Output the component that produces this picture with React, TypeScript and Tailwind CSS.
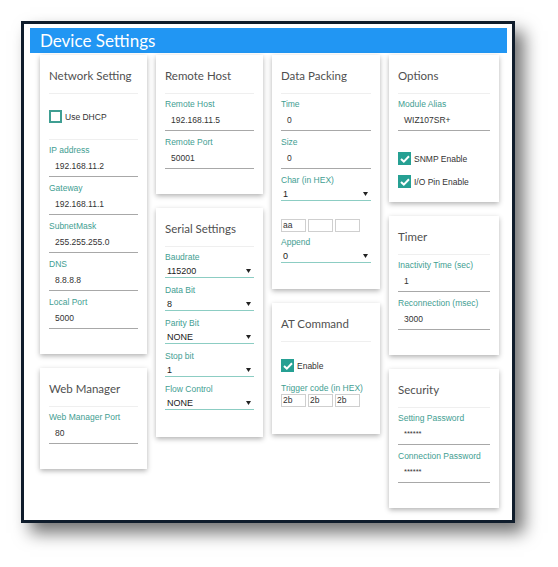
import React from 'react';

const TEAL = 'text-[#3f9e92]';

const Card: React.FC<{ title: string; pb?: string; children: React.ReactNode }> = ({ title, pb = 'pb-[25px]', children }) => (
  <div className={`bg-white shadow-[0_2px_5px_rgba(0,0,0,0.3)] px-[9px] ${pb}`}>
    <div className="pt-[13px] pb-[9px] border-b border-[#efefef] text-[11.5px] leading-[16px] text-[#505050] font-['Lato',sans-serif]">
      {title}
    </div>
    {children}
  </div>
);

const Label: React.FC<{ children: React.ReactNode }> = ({ children }) => (
  <div className={`h-[10px] leading-[10px] text-[8.5px] ${TEAL} whitespace-nowrap`}>{children}</div>
);

const TextField: React.FC<{ label: string; value: string; small?: boolean }> = ({ label, value, small }) => (
  <div>
    <Label>{label}</Label>
    <div className={`pt-[5px] pb-[4px] pl-[6px] leading-[12px] border-b border-[#a8a8a8] text-[#333] ${small ? 'text-[7.5px]' : 'text-[8.5px]'}`}>
      {value}
    </div>
  </div>
);

const SelectField: React.FC<{ label: string; value: string }> = ({ label, value }) => (
  <div>
    <Label>{label}</Label>
    <div className="pt-[4px] pb-[1px] pl-[2px] pr-[3px] leading-[10px] border-b border-[#8ccdc3] text-[9px] text-[#222] flex items-center justify-between">
      <span>{value}</span>
      <svg width="5" height="4" viewBox="0 0 5 4">
        <path d="M0 0 L5 0 L2.5 4 Z" fill="#222" />
      </svg>
    </div>
  </div>
);

const Check: React.FC<{ label: string; checked?: boolean }> = ({ label, checked }) => (
  <div className="flex items-center gap-[3px] h-[13px]">
    {checked ? (
      <div className="w-[13px] h-[13px] bg-[#26a093] flex items-center justify-center">
        <svg width="10" height="8" viewBox="0 0 10 8">
          <path d="M1 4 L3.8 6.6 L9 1.2" fill="none" stroke="#fff" strokeWidth="2" />
        </svg>
      </div>
    ) : (
      <div className="w-[13px] h-[13px] border-2 border-[#3f9e92]" />
    )}
    <span className="text-[8.5px] leading-[10px] text-[#333]">{label}</span>
  </div>
);

const HexBoxes: React.FC<{ values: string[] }> = ({ values }) => (
  <div className="flex gap-[2px]">
    {values.map((v, i) => (
      <div key={i} className="w-[25px] h-[13px] border border-[#cfcfcf] pl-[1px] text-[8.5px] leading-[11px] text-[#333]">
        {v}
      </div>
    ))}
  </div>
);

const App: React.FC = () => {
  return (
    <div className="w-[558px] h-[567px] bg-white pl-[21px] pt-[21px] font-['Liberation_Sans',Arial,sans-serif]">
      <div className="w-[494px] h-[502px] border-[3px] border-[#0f1c2b] bg-white shadow-[9px_10px_16px_rgba(0,0,0,0.55)] pt-[4px] pl-[6px]">
        <div className="w-[477px] h-[25px] bg-[#2196f3] text-white text-[17px] leading-[26px] pl-[10px] font-['Lato',sans-serif]">
          Device Settings
        </div>
        <div className="flex gap-[9px] pl-[10px] pt-[2px]">
          {/* column 1 */}
          <div className="w-[107px] flex flex-col gap-[14px]">
            <Card title="Network Setting">
              <div className="pt-[16px] pb-[16px] border-b border-[#efefef]">
                <Check label="Use DHCP" />
              </div>
              <div className="flex flex-col gap-[6px] mt-[5px]">
                <TextField label="IP address" value="192.168.11.2" />
                <TextField label="Gateway" value="192.168.11.1" />
                <TextField label="SubnetMask" value="255.255.255.0" />
                <TextField label="DNS" value="8.8.8.8" />
                <TextField label="Local Port" value="5000" />
              </div>
            </Card>
            <Card title="Web Manager">
              <div className="mt-[5px]">
                <TextField label="Web Manager Port" value="80" />
              </div>
            </Card>
          </div>

          {/* column 2 */}
          <div className="w-[107px] flex flex-col gap-[14px]">
            <Card title="Remote Host">
              <div className="flex flex-col gap-[6px] mt-[5px]">
                <TextField label="Remote Host" value="192.168.11.5" />
                <TextField label="Remote Port" value="50001" />
              </div>
            </Card>
            <Card title="Serial Settings" pb="pb-[27px]">
              <div className="flex flex-col gap-[7px] mt-[5px]">
                <SelectField label="Baudrate" value="115200" />
                <SelectField label="Data Bit" value="8" />
                <SelectField label="Parity Bit" value="NONE" />
                <SelectField label="Stop bit" value="1" />
                <SelectField label="Flow Control" value="NONE" />
              </div>
            </Card>
          </div>

          {/* column 3 */}
          <div className="w-[108px] flex flex-col gap-[14px]">
            <Card title="Data Packing" pb="pb-[26px]">
              <div className="flex flex-col gap-[6px] mt-[5px]">
                <TextField label="Time" value="0" />
                <TextField label="Size" value="0" />
              </div>
              <div className="mt-[6px]">
                <SelectField label="Char (in HEX)" value="1" />
              </div>
              <div className="mt-[18px]">
                <HexBoxes values={['aa', '', '']} />
              </div>
              <div className="mt-[5px]">
                <SelectField label="Append" value="0" />
              </div>
            </Card>
            <Card title="AT Command" pb="pb-[27px]">
              <div className="mt-[17px]">
                <Check label="Enable" checked />
              </div>
              <div className="mt-[11px]">
                <Label>Trigger code (in HEX)</Label>
              </div>
              <div className="mt-[1px]">
                <HexBoxes values={['2b', '2b', '2b']} />
              </div>
            </Card>
          </div>

          {/* column 4 */}
          <div className="w-[110px] flex flex-col gap-[14px]">
            <Card title="Options" pb="pb-[14px]">
              <div className="mt-[5px]">
                <TextField label="Module Alias" value="WIZ107SR+" />
              </div>
              <div className="mt-[21px] flex flex-col gap-[10px]">
                <Check label="SNMP Enable" checked />
                <Check label="I/O Pin Enable" checked />
              </div>
            </Card>
            <Card title="Timer">
              <div className="flex flex-col gap-[6px] mt-[5px]">
                <TextField label="Inactivity Time (sec)" value="1" />
                <TextField label="Reconnection (msec)" value="3000" />
              </div>
            </Card>
            <Card title="Security">
              <div className="flex flex-col gap-[6px] mt-[5px]">
                <TextField label="Setting Password" value="******" small />
                <TextField label="Connection Password" value="******" small />
              </div>
            </Card>
          </div>
        </div>
      </div>
    </div>
  );
};

export default App;
